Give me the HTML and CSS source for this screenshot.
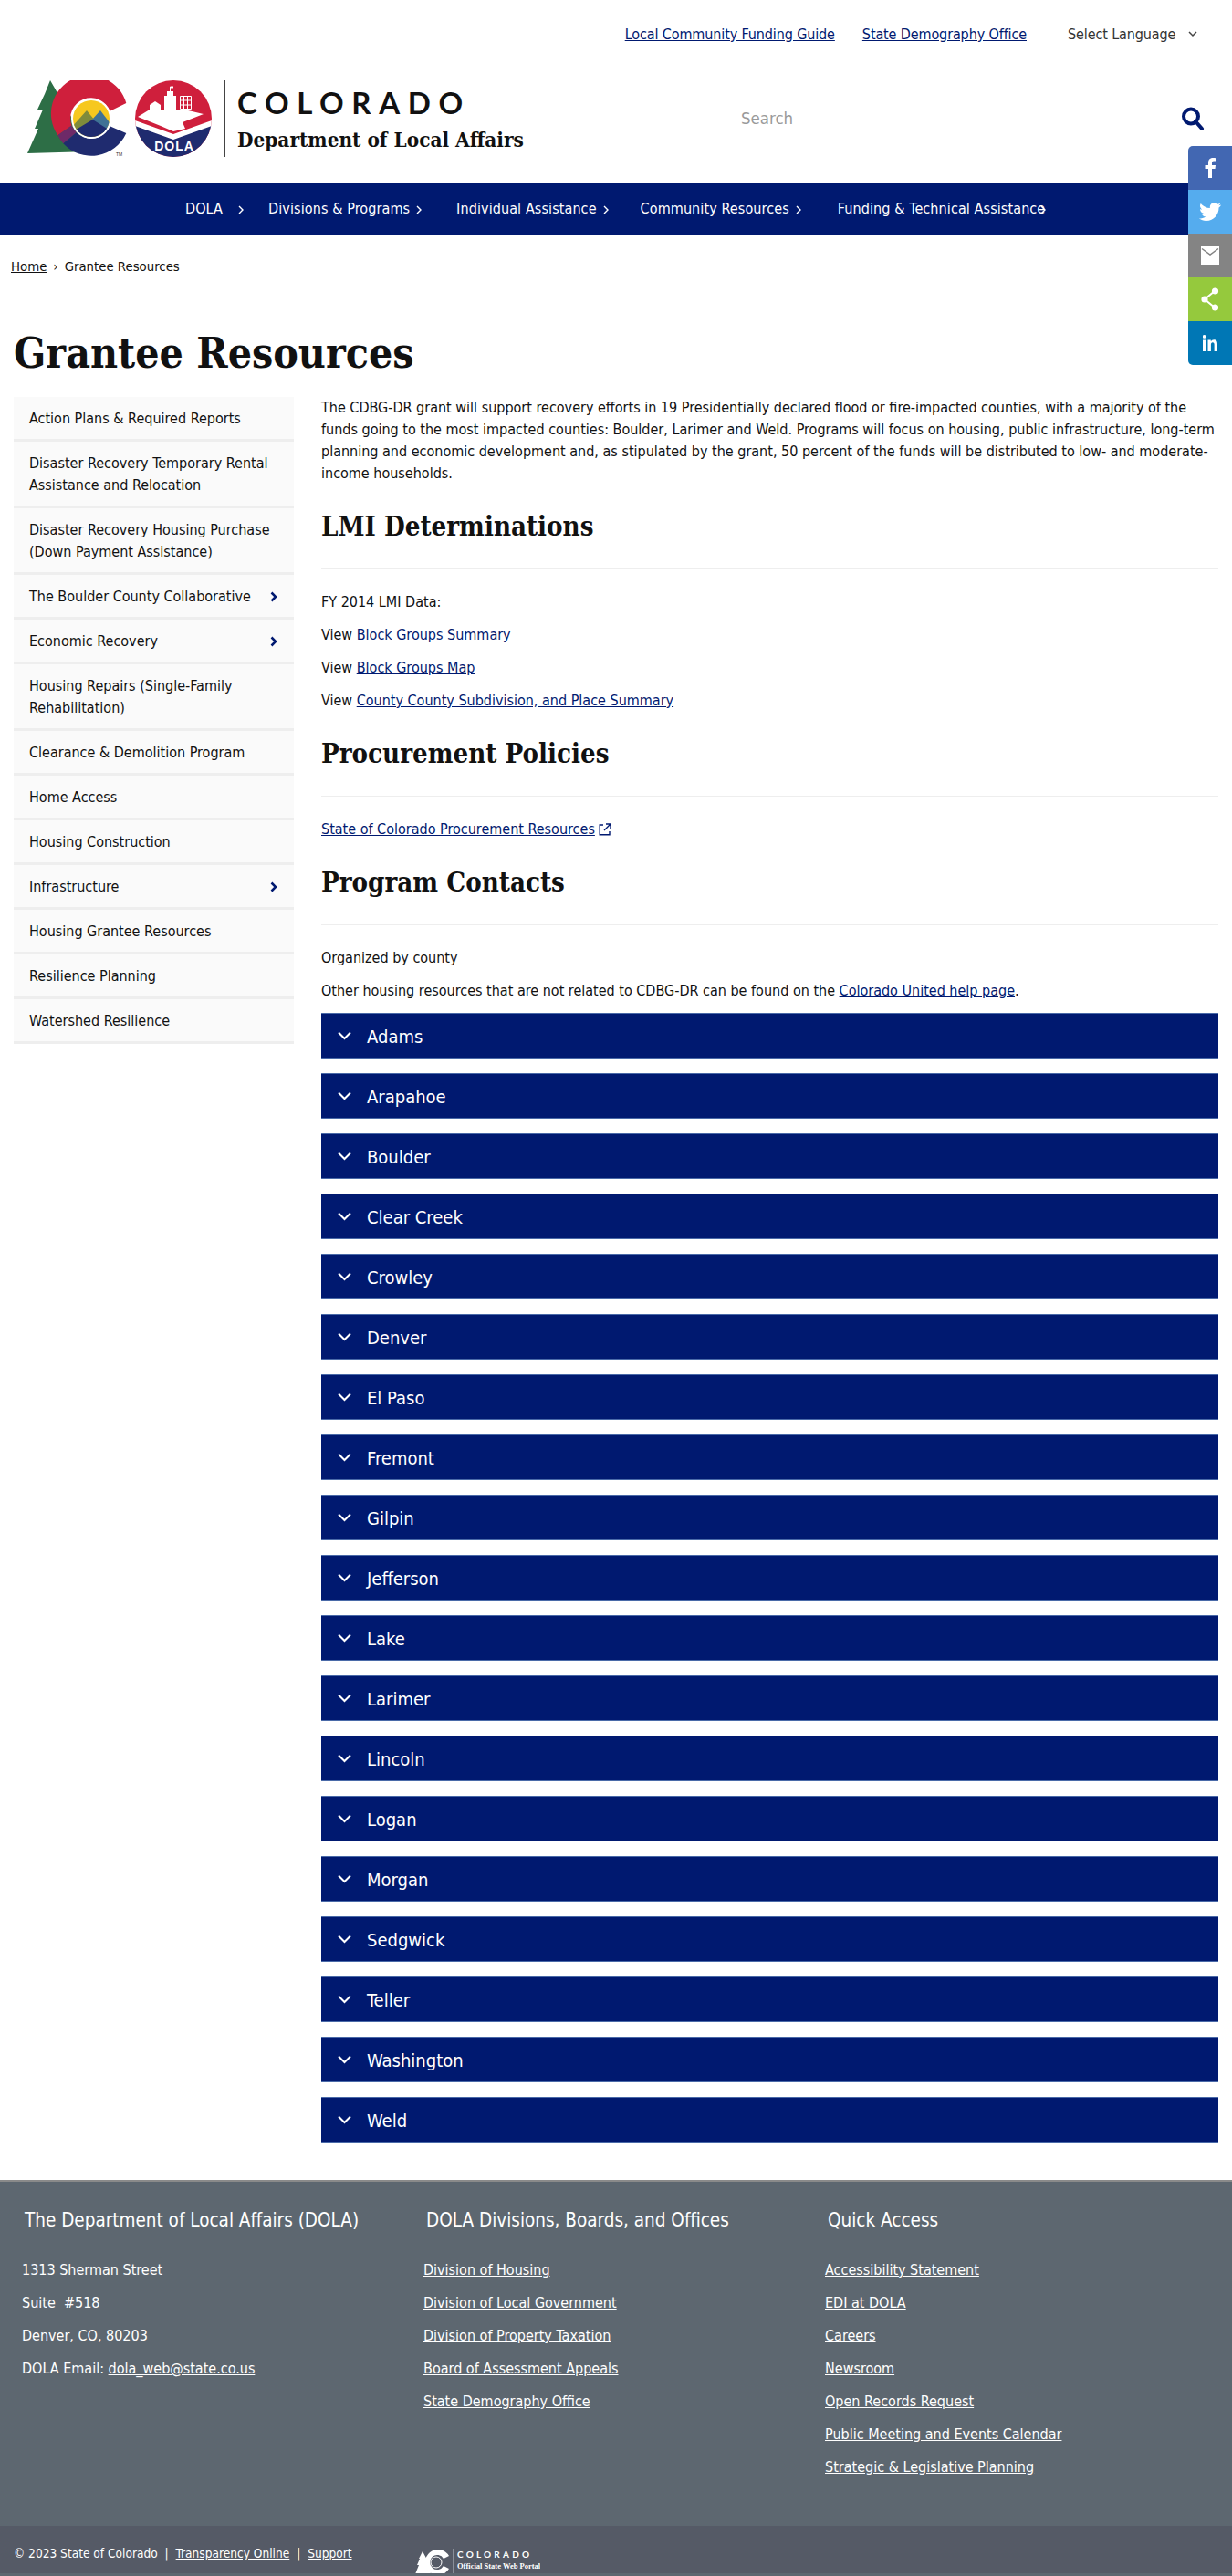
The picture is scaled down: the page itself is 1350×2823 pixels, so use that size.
FILE: index.html
```html
<!DOCTYPE html>
<html lang="en">
<head>
<meta charset="utf-8">
<title>Grantee Resources | Colorado Department of Local Affairs</title>
<link rel="stylesheet" href="styles.css">
</head>
<body>
<header class="site-header">
  <div class="topbar">
    <a href="#" class="toplink">Local Community Funding Guide</a>
    <a href="#" class="toplink">State Demography Office</a>
    <div class="lang">Select Language
      <svg class="lang-chev" width="10" height="7" viewBox="0 0 10 7"><path d="M1 1l4 4 4-4" fill="none" stroke="#444" stroke-width="1.5"/></svg>
    </div>
  </div>
  <div class="masthead">
    <a href="#" class="logo">
      <svg class="logo-mark" width="210" height="84" viewBox="0 0 210 84">
        <defs>
          <clipPath id="sky"><circle cx="70" cy="42" r="20"/></clipPath>
          <clipPath id="dola"><circle cx="160" cy="42" r="42"/></clipPath>
        </defs>
        <path d="M25 0L40 26 70 78 0 80 12 53 8 53 17 32 11 32 19 15z" fill="#2d6e46"/>
        <path d="M108.3 25A42 42 0 1 0 33.3 60.3L48.6 49.6A22 22 0 0 1 90.4 33.7z" fill="#cf1f3c"/>
        <path d="M33.3 60.3A42 42 0 0 0 39.3 69.3L54 57A22 22 0 0 1 48.6 49.6z" fill="#6e2a68"/>
        <path d="M39.3 69.3A42 42 0 0 0 108.3 58L90.4 50.3A22 22 0 0 1 54 57z" fill="#1f2b6f"/>
        <circle cx="70" cy="42" r="22" fill="#fff"/>
        <g clip-path="url(#sky)">
          <rect x="48" y="20" width="44" height="44" fill="#f6c81e"/>
          <path d="M48 52L65 33 74 44 70 62z" fill="#7f8b3b"/>
          <path d="M70 44L80 33 92 49 86 62z" fill="#3f7295"/>
          <path d="M50 56L71.5 43 92 56V64H50z" fill="#1f2b6f"/>
        </g>
        <text x="97" y="83" class="tm">TM</text>
        <g clip-path="url(#dola)">
          <rect x="118" y="0" width="84" height="84" fill="#cf1f3c"/>
          <path d="M118 44L160 59 202 44V52L160 66 118 52z" fill="#fff"/>
          <path d="M118 50L160 65 202 50V84H118z" fill="#1f2b6f"/>
        </g>
        <path d="M121 40L134 32 172 32 193 37 170 46 173 53 160 56 146 50z" fill="#fff"/>
        <path d="M134 33V27L140 23 146 27V33z" fill="#fff"/>
        <path d="M150 32V17H153V12H160V17H163V32z" fill="#fff"/>
        <path d="M156.5 12V7" stroke="#fff" stroke-width="1"/>
        <path d="M156.5 6.5H160V8.5H156.5z" fill="#fff"/>
        <path d="M167.500 17.500H179.500V31.500H167.500zM167.500 22H179.500M167.500 27H179.500M171.500 17.500V31.500M175.500 17.500V31.500" fill="none" stroke="#fff" stroke-width="1"/>
        <text x="161" y="77" text-anchor="middle" class="dola-mark">DOLA</text>
      </svg>
      <span class="logo-rule"></span>
      <span class="logo-text">
        <span class="logo-state">COLORADO</span>
        <span class="logo-dept">Department of Local Affairs</span>
      </span>
    </a>
    <form class="search">
      <input class="search-input" type="text" placeholder="Search" aria-label="Search">
      <svg class="search-icon" width="26" height="26" viewBox="0 0 26 26"><circle cx="11" cy="10.500" r="8" fill="none" stroke="#001970" stroke-width="4"/><path d="M16 16l7 8" stroke="#001970" stroke-width="4" stroke-linecap="round"/></svg>
    </form>
  </div>
  <nav class="mainnav">
    <a href="#" class="navitem navitem-first">DOLA<svg class="navchev navchev-first" width="6" height="10" viewBox="0 0 6 10"><path d="M1 1l4 4-4 4" fill="none" stroke="#fff" stroke-width="1.400"/></svg></a>
    <a href="#" class="navitem">Divisions &amp; Programs<svg class="navchev" width="6" height="10" viewBox="0 0 6 10"><path d="M1 1l4 4-4 4" fill="none" stroke="#fff" stroke-width="1.400"/></svg></a>
    <a href="#" class="navitem navitem-tight">Individual Assistance<svg class="navchev" width="6" height="10" viewBox="0 0 6 10"><path d="M1 1l4 4-4 4" fill="none" stroke="#fff" stroke-width="1.400"/></svg></a>
    <a href="#" class="navitem navitem-wide">Community Resources<svg class="navchev" width="6" height="10" viewBox="0 0 6 10"><path d="M1 1l4 4-4 4" fill="none" stroke="#fff" stroke-width="1.400"/></svg></a>
    <a href="#" class="navitem">Funding &amp; Technical Assistance<svg class="navchev navchev-last" width="6" height="10" viewBox="0 0 6 10"><path d="M1 1l4 4-4 4" fill="none" stroke="#fff" stroke-width="1.400"/></svg></a>
  </nav>
</header>

<aside class="share">
  <a href="#" class="share-btn share-fb" aria-label="Facebook"><svg width="14" height="22" viewBox="0 0 14 22"><path d="M9 22V12h3.500l.5-4H9V5.500C9 4.300 9.500 3.600 11 3.600h2V.2C12.500.1 11.500 0 10.300 0 7.300 0 5 1.800 5 5.100V8H1.500v4H5v10z" fill="#fff"/></svg></a>
  <a href="#" class="share-btn share-tw" aria-label="Twitter"><svg width="24" height="20" viewBox="0 0 24 20"><path d="M24 2.400c-.9.400-1.800.7-2.800.8 1-.6 1.800-1.600 2.200-2.700-1 .6-2 1-3.100 1.200C19.400.700 18.100 0 16.700 0c-2.700 0-4.900 2.200-4.900 4.900 0 .4 0 .8.100 1.100C7.800 5.800 4.100 3.900 1.700.9 1.300 1.600 1 2.500 1 3.400c0 1.700.9 3.200 2.200 4.100-.8 0-1.600-.2-2.200-.6v.1c0 2.400 1.700 4.400 3.900 4.800-.4.100-.8.200-1.300.2-.3 0-.6 0-.9-.1.600 2 2.400 3.400 4.600 3.400-1.700 1.300-3.800 2.100-6.100 2.100-.4 0-.8 0-1.200-.1C2.200 19.200 4.800 20 7.500 20c9.100 0 14-7.500 14-14v-.6c1-.7 1.800-1.600 2.500-3z" fill="#fff"/></svg></a>
  <a href="#" class="share-btn share-mail" aria-label="Email"><svg width="20" height="20" viewBox="0 0 20 20"><path d="M0 0H20V20H0z" fill="#fff"/><path d="M1 2.500L10 9l9-6.500" fill="none" stroke="#848484" stroke-width="1.500"/></svg></a>
  <a href="#" class="share-btn share-more" aria-label="Share"><svg width="20" height="26" viewBox="0 0 20 26"><path d="M15 4L4 13l11 9" fill="none" stroke="#fff" stroke-width="2"/><circle cx="15.500" cy="4" r="3.600" fill="#fff"/><circle cx="4" cy="13" r="3.600" fill="#fff"/><circle cx="15.500" cy="22" r="3.600" fill="#fff"/></svg></a>
  <a href="#" class="share-btn share-in" aria-label="LinkedIn"><svg width="16" height="18" viewBox="0 0 16 18"><path d="M0 5.500H3.400V18H0z" fill="#fff"/><circle cx="1.700" cy="1.900" r="1.900" fill="#fff"/><path d="M5.500 5.500H8.800V7.200C9.500 6 10.800 5.200 12.300 5.200 15 5.200 16 7 16 10V18H12.600V10.800C12.600 9.300 12.100 8.300 10.800 8.300 9.600 8.300 8.900 9.200 8.900 10.800V18H5.500z" fill="#fff"/></svg></a>
</aside>

<div class="breadcrumb"><a href="#">Home</a><span class="crumb-sep">›</span><span>Grantee Resources</span></div>

<h1 class="page-title">Grantee Resources</h1>

<div class="layout">
  <ul class="sidenav">
    <li><a href="#">Action Plans &amp; Required Reports</a></li>
    <li><a href="#">Disaster Recovery Temporary Rental Assistance and Relocation</a></li>
    <li><a href="#">Disaster Recovery Housing Purchase (Down Payment Assistance)</a></li>
    <li><a href="#">The Boulder County Collaborative<svg class="sidechev" width="8" height="12" viewBox="0 0 8 12"><path d="M1.500 1.500L6 6l-4.500 4.500" fill="none" stroke="#001970" stroke-width="2.500"/></svg></a></li>
    <li><a href="#">Economic Recovery<svg class="sidechev" width="8" height="12" viewBox="0 0 8 12"><path d="M1.500 1.500L6 6l-4.500 4.500" fill="none" stroke="#001970" stroke-width="2.500"/></svg></a></li>
    <li><a href="#">Housing Repairs (Single-Family Rehabilitation)</a></li>
    <li><a href="#">Clearance &amp; Demolition Program</a></li>
    <li><a href="#">Home Access</a></li>
    <li><a href="#">Housing Construction</a></li>
    <li><a href="#">Infrastructure<svg class="sidechev" width="8" height="12" viewBox="0 0 8 12"><path d="M1.500 1.500L6 6l-4.500 4.500" fill="none" stroke="#001970" stroke-width="2.500"/></svg></a></li>
    <li><a href="#">Housing Grantee Resources</a></li>
    <li><a href="#">Resilience Planning</a></li>
    <li><a href="#">Watershed Resilience</a></li>
  </ul>
  <main class="content">
    <p>The CDBG-DR grant will support recovery efforts in 19 Presidentially declared flood or fire-impacted counties, with a majority of the funds going to the most impacted counties: Boulder, Larimer and Weld. Programs will focus on housing, public infrastructure, long-term planning and economic development and, as stipulated by the grant, 50 percent of the funds will be distributed to low- and moderate-income households.</p>
    <h2>LMI Determinations</h2>
    <p>FY 2014 LMI Data:</p>
    <p>View <a href="#">Block Groups Summary</a></p>
    <p>View <a href="#">Block Groups Map</a></p>
    <p>View <a href="#">County County Subdivision, and Place Summary</a></p>
    <h2>Procurement Policies</h2>
    <p><a href="#">State of Colorado Procurement Resources</a> <svg class="ext" width="14" height="14" viewBox="0 0 14 14"><path d="M5 2H1.200V12.800H12V9M8 1H13V6M13 1L6 8" fill="none" stroke="#001970" stroke-width="1.400"/></svg></p>
    <h2>Program Contacts</h2>
    <p>Organized by county</p>
    <p>Other housing resources that are not related to CDBG-DR can be found on the <a href="#">Colorado United help page</a>.</p>
    <div class="accordion">
      <div class="acc-item"><svg class="acc-chev" width="15" height="10" viewBox="0 0 15 10"><path d="M1 1.500l6.500 6.500L14 1.500" fill="none" stroke="#fff" stroke-width="2"/></svg>Adams</div>
      <div class="acc-item"><svg class="acc-chev" width="15" height="10" viewBox="0 0 15 10"><path d="M1 1.500l6.500 6.500L14 1.500" fill="none" stroke="#fff" stroke-width="2"/></svg>Arapahoe</div>
      <div class="acc-item"><svg class="acc-chev" width="15" height="10" viewBox="0 0 15 10"><path d="M1 1.500l6.500 6.500L14 1.500" fill="none" stroke="#fff" stroke-width="2"/></svg>Boulder</div>
      <div class="acc-item"><svg class="acc-chev" width="15" height="10" viewBox="0 0 15 10"><path d="M1 1.500l6.500 6.500L14 1.500" fill="none" stroke="#fff" stroke-width="2"/></svg>Clear Creek</div>
      <div class="acc-item"><svg class="acc-chev" width="15" height="10" viewBox="0 0 15 10"><path d="M1 1.500l6.500 6.500L14 1.500" fill="none" stroke="#fff" stroke-width="2"/></svg>Crowley</div>
      <div class="acc-item"><svg class="acc-chev" width="15" height="10" viewBox="0 0 15 10"><path d="M1 1.500l6.500 6.500L14 1.500" fill="none" stroke="#fff" stroke-width="2"/></svg>Denver</div>
      <div class="acc-item"><svg class="acc-chev" width="15" height="10" viewBox="0 0 15 10"><path d="M1 1.500l6.500 6.500L14 1.500" fill="none" stroke="#fff" stroke-width="2"/></svg>El Paso</div>
      <div class="acc-item"><svg class="acc-chev" width="15" height="10" viewBox="0 0 15 10"><path d="M1 1.500l6.500 6.500L14 1.500" fill="none" stroke="#fff" stroke-width="2"/></svg>Fremont</div>
      <div class="acc-item"><svg class="acc-chev" width="15" height="10" viewBox="0 0 15 10"><path d="M1 1.500l6.500 6.500L14 1.500" fill="none" stroke="#fff" stroke-width="2"/></svg>Gilpin</div>
      <div class="acc-item"><svg class="acc-chev" width="15" height="10" viewBox="0 0 15 10"><path d="M1 1.500l6.500 6.500L14 1.500" fill="none" stroke="#fff" stroke-width="2"/></svg>Jefferson</div>
      <div class="acc-item"><svg class="acc-chev" width="15" height="10" viewBox="0 0 15 10"><path d="M1 1.500l6.500 6.500L14 1.500" fill="none" stroke="#fff" stroke-width="2"/></svg>Lake</div>
      <div class="acc-item"><svg class="acc-chev" width="15" height="10" viewBox="0 0 15 10"><path d="M1 1.500l6.500 6.500L14 1.500" fill="none" stroke="#fff" stroke-width="2"/></svg>Larimer</div>
      <div class="acc-item"><svg class="acc-chev" width="15" height="10" viewBox="0 0 15 10"><path d="M1 1.500l6.500 6.500L14 1.500" fill="none" stroke="#fff" stroke-width="2"/></svg>Lincoln</div>
      <div class="acc-item"><svg class="acc-chev" width="15" height="10" viewBox="0 0 15 10"><path d="M1 1.500l6.500 6.500L14 1.500" fill="none" stroke="#fff" stroke-width="2"/></svg>Logan</div>
      <div class="acc-item"><svg class="acc-chev" width="15" height="10" viewBox="0 0 15 10"><path d="M1 1.500l6.500 6.500L14 1.500" fill="none" stroke="#fff" stroke-width="2"/></svg>Morgan</div>
      <div class="acc-item"><svg class="acc-chev" width="15" height="10" viewBox="0 0 15 10"><path d="M1 1.500l6.500 6.500L14 1.500" fill="none" stroke="#fff" stroke-width="2"/></svg>Sedgwick</div>
      <div class="acc-item"><svg class="acc-chev" width="15" height="10" viewBox="0 0 15 10"><path d="M1 1.500l6.500 6.500L14 1.500" fill="none" stroke="#fff" stroke-width="2"/></svg>Teller</div>
      <div class="acc-item"><svg class="acc-chev" width="15" height="10" viewBox="0 0 15 10"><path d="M1 1.500l6.500 6.500L14 1.500" fill="none" stroke="#fff" stroke-width="2"/></svg>Washington</div>
      <div class="acc-item"><svg class="acc-chev" width="15" height="10" viewBox="0 0 15 10"><path d="M1 1.500l6.500 6.500L14 1.500" fill="none" stroke="#fff" stroke-width="2"/></svg>Weld</div>
    </div>
  </main>
</div>

<footer class="footer">
  <div class="footer-cols">
    <section>
      <h3>The Department of Local Affairs (DOLA)</h3>
      <p>1313 Sherman Street</p>
      <p>Suite&nbsp; #518</p>
      <p>Denver, CO, 80203</p>
      <p>DOLA Email: <a href="#">dola_web@state.co.us</a></p>
    </section>
    <section>
      <h3>DOLA Divisions, Boards, and Offices</h3>
      <p><a href="#">Division of Housing</a></p>
      <p><a href="#">Division of Local Government</a></p>
      <p><a href="#">Division of Property Taxation</a></p>
      <p><a href="#">Board of Assessment Appeals</a></p>
      <p><a href="#">State Demography Office</a></p>
    </section>
    <section>
      <h3>Quick Access</h3>
      <p><a href="#">Accessibility Statement</a></p>
      <p><a href="#">EDI at DOLA</a></p>
      <p><a href="#">Careers</a></p>
      <p><a href="#">Newsroom</a></p>
      <p><a href="#">Open Records Request</a></p>
      <p><a href="#">Public Meeting and Events Calendar</a></p>
      <p><a href="#">Strategic &amp; Legislative Planning</a></p>
    </section>
  </div>
  <div class="footer-bar">
    <div class="legal">© 2023 State of Colorado <span class="pipe">|</span> <a href="#">Transparency Online</a> <span class="pipe">|</span> <a href="#">Support</a></div>
    <div class="portal">
      <svg width="38" height="29" viewBox="0 0 38 29"><path d="M8 3L14 14 17 27 0 28 4 18 2 18 5 11 4 11z" fill="#fff"/><path d="M37 8A14 14 0 1 0 37 22L31 19A8 8 0 1 1 31 11z" fill="#fff"/><circle cx="23" cy="15" r="6" fill="none" stroke="#fff" stroke-width="1"/></svg>
      <div class="portal-text">
        <span class="portal-state">COLORADO</span>
        <span class="portal-sub">Official State Web Portal</span>
      </div>
    </div>
  </div>
</footer>
</body>
</html>
```
FILE: styles.css
```css
* { box-sizing: border-box; }
html, body { margin: 0; padding: 0; }
body {
  position: relative;
  background: #fff;
  color: #111;
  font-family: "DejaVu Sans Condensed", "Liberation Sans", sans-serif;
  font-size: 16px;
  line-height: 24px;
}
a { color: #001970; }

.topbar {
  height: 76px;
  padding-top: 26px;
  display: flex;
  justify-content: flex-end;
  align-items: flex-start;
  letter-spacing: -0.120px;
}
.toplink { margin-right: 30px; }
.lang { width: 180px; margin-left: 15px; color: #333; }
.lang-chev { margin-left: 9px; vertical-align: 2px; }

.masthead {
  height: 125px;
  padding: 12px 30px 0 30px;
  display: flex;
  justify-content: space-between;
  align-items: flex-start;
}
.logo { display: flex; align-items: center; color: #111; text-decoration: none; }
.logo-mark { display: block; }
.tm { font: 5px "Liberation Sans", sans-serif; fill: #333; }
.dola-mark { font: bold 14px "Liberation Sans", sans-serif; letter-spacing: 1px; fill: #fff; }
.logo-rule { width: 1px; height: 84px; background: #444; margin: 0 13px 0 6px; }
.logo-text { display: flex; flex-direction: column; }
.logo-state {
  font: bold 33px/38px "Lato", sans-serif;
  letter-spacing: 8.600px;
  color: #111;
}
.logo-dept {
  margin-top: 7px;
  font: bold 22.400px/30px "DejaVu Serif Condensed", serif;
  color: #111;
}
.search { width: 508px; height: 60px; margin-top: 12px; display: flex; justify-content: space-between; align-items: center; }
.search-input {
  width: 300px;
  border: 0;
  padding: 0;
  background: transparent;
  font: 18.500px/30px "DejaVu Sans Condensed", sans-serif;
  color: #333;
  outline: none;
}
.search-input::placeholder { color: #9a9a9a; opacity: 1; }
.search-icon { margin-top: -1px; }

.mainnav {
  height: 56px;
  padding-left: 203px;
  background: #001970;
  display: flex;
  align-items: center;
  box-shadow: 0 1px 0 #4a6aa8;
  letter-spacing: 0.100px;
}
.navitem { color: #fff; text-decoration: none; margin-right: 38px; white-space: nowrap; }
.navitem-first { margin-right: 27px; }
.navitem-tight { margin-right: 35px; }
.navitem-wide { margin-right: 40px; }
.navchev { margin-left: 7px; vertical-align: -1px; }
.navchev-first { margin-left: 17px; }
.navchev-last { margin-left: -5px; }

.share { position: absolute; top: 160px; right: 0; width: 48px; border-radius: 5px 0 0 5px; overflow: hidden; }
.share-btn { height: 48px; display: flex; align-items: center; justify-content: center; }
.share-fb { background: #4267b2; }
.share-tw { background: #55acee; }
.share-mail { background: #848484; }
.share-more { background: #95c93d; }
.share-in { background: #0077b5; }

.breadcrumb { padding: 23px 0 0 12px; height: 47px; font-size: 14.800px; color: #111; }
.breadcrumb a { color: #111; }
.crumb-sep { margin: 0 7px; }

.page-title {
  margin: 55px 0 20px 15px;
  font: bold 46px/56px "DejaVu Serif Condensed", serif;
  color: #111;
}

.layout { display: grid; grid-template-columns: 307px 983px; column-gap: 30px; padding-left: 15px; }
.sidenav { list-style: none; margin: 0; padding: 0; align-self: start; }
.sidenav li { background: #fafafa; border-bottom: 3px solid #eee; }
.sidenav a { position: relative; display: block; padding: 12px 17px 10px; color: #111; text-decoration: none; }
.sidechev { position: absolute; right: 18px; top: 18px; }

.content p { margin: 0 0 12px; }
.content h2 {
  margin: 24px 0 24px;
  padding-bottom: 24px;
  border-bottom: 1px solid #eee;
  font: bold 29.200px/44px "DejaVu Serif Condensed", serif;
  color: #111;
}
.ext { vertical-align: -2px; }
.accordion { display: flex; flex-direction: column; gap: 16px; }
.acc-item {
  height: 50px;
  padding: 2px 0 0 18px;
  display: flex;
  align-items: center;
  background: #001970;
  border-top: 1px solid #4a6aa8;
  border-bottom: 1px solid #4a6aa8;
  color: #fff;
  font-size: 20px;
}
.acc-chev { margin-right: 17px; margin-top: -3px; }

.footer { margin-top: 41px; background: #5d6770; color: #fff; border-top: 2px solid #8a8a8a; height: 434px; }
.footer a { color: #fff; }
.footer-cols { height: 377px; padding: 28px 0 0 24px; display: grid; grid-template-columns: 440px 440px 440px; }
.footer h3 { margin: 0 0 29px 3px; font-weight: 400; font-size: 20.500px; line-height: 28px; }
.footer p { margin: 0 0 12px; }
.footer-bar {
  height: 52px;
  padding-left: 15px;
  background: #555a66;
  display: flex;
  font-size: 13.600px;
}
.legal { padding-top: 18px; width: 440px; white-space: nowrap; }
.pipe { margin: 0 4px; }
.portal { display: flex; padding-top: 25px; height: 52px; overflow: hidden; }
.portal-text { margin-left: 3px; padding-left: 4px; border-left: 1px solid #8a8f99; display: flex; flex-direction: column; height: 28px; }
.portal-state { font: bold 10px/12px "Lato", sans-serif; letter-spacing: 3.200px; }
.portal-sub { font: bold 8.500px/14px "Liberation Serif", serif; }
```
